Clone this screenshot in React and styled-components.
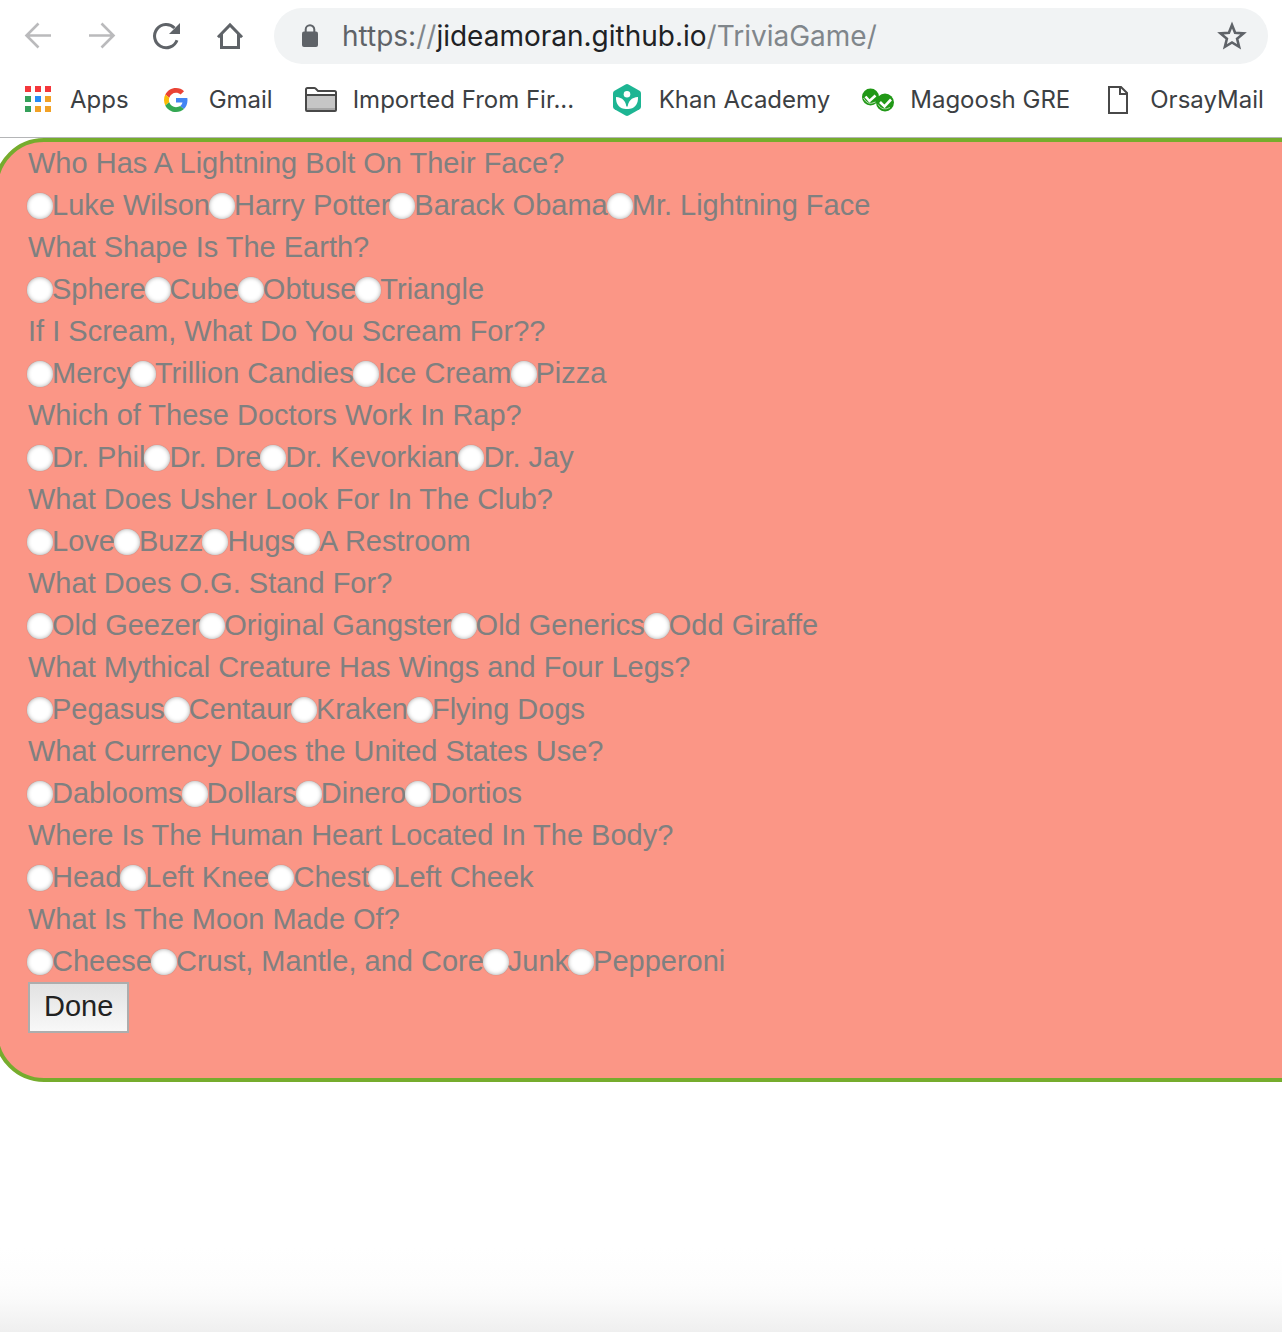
import React from "react";
import styled, { createGlobalStyle } from "styled-components";

const GlobalStyle = createGlobalStyle`
  *, *::before, *::after { box-sizing: border-box; }
  body { margin: 0; background: #fff; }
`;

const uiFont = `Inter, Roboto, "Liberation Sans", sans-serif`;
const pageFont = `"Liberation Sans", Arial, Helvetica, sans-serif`;

const Page = styled.div`
  display: flex;
  flex-direction: column;
  min-height: 100vh;
  overflow: hidden;
  background: linear-gradient(to top, #efefef, #fafafa 32px, #fdfdfd 48px, #fff 84px) #fff;
`;

const Chrome = styled.header`
  background: #fff;
  border-bottom: 1px solid #b4b5b7;
  font-family: ${uiFont};
`;

const Toolbar = styled.div`
  display: flex;
  align-items: center;
  gap: 32px;
  padding: 8px 14px 8px 22px;
`;

const NavButton = styled.button`
  display: flex;
  flex: none;
  width: 32px;
  height: 32px;
  padding: 0;
  border: 0;
  background: none;
  color: #5f6368;

  &:disabled { color: #bababc; }
`;

const AddressBar = styled.div`
  display: flex;
  flex: 1;
  align-items: center;
  gap: 16px;
  min-width: 0;
  height: 56px;
  margin-left: -4px;
  padding: 0 20px;
  border-radius: 28px;
  background: #f1f3f4;
  color: #5f6368;
`;

const Url = styled.div`
  flex: 1;
  min-width: 0;
  overflow: hidden;
  white-space: nowrap;
  font-size: 28px;
  line-height: 40px;
  color: #80868b;
`;

const UrlScheme = styled.span`
  color: #5f6368;
`;

const UrlHost = styled.span`
  color: #202124;
`;

const Bookmarks = styled.nav`
  display: flex;
  align-items: center;
  gap: 32px;
  height: 65px;
  padding: 0 20px 9px 22px;
`;

const Bookmark = styled.a`
  display: flex;
  flex: none;
  align-items: center;
  gap: 16px;
  min-width: ${({ $folder }) => ($folder ? "274px" : "0")};
  color: #3c4043;
  font-size: 24px;
  line-height: 32px;
  text-decoration: none;
  white-space: nowrap;
`;

const Glyph = styled.svg`
  display: block;
  flex: none;
  width: 32px;
  height: 32px;
`;

const Quiz = styled.form`
  display: flow-root;
  margin: 0 -60px 0 -6px;
  padding: 0 84px 45px 30px;
  border: 4px solid #76ac2d;
  border-radius: 50px;
  background: #fb9686;
  color: #808080;
  font-family: ${pageFont};
  font-size: 29px;
  line-height: 42px;
`;

const Question = styled.fieldset`
  min-width: 0;
  margin: 0;
  padding: 0;
  border: 0;
`;

const Prompt = styled.legend`
  display: block;
  padding: 0;
`;

const Answers = styled.div`
  display: flex;
  flex-wrap: wrap;
`;

const Answer = styled.label`
  display: flex;
  align-items: center;
  white-space: nowrap;
`;

const Radio = styled.input`
  appearance: none;
  flex: none;
  width: 26px;
  height: 26px;
  margin: 2px -1px 0;
  border-radius: 50%;
  background: #fff;
  box-shadow: inset 0 0 4px #aaa, 0 0 1px #8c7c78;

  &:checked { background: radial-gradient(#444 5px, #fff 6px); }
`;

const DoneButton = styled.button`
  display: block;
  height: 51px;
  padding: 0 14px 4px;
  border: 2px solid #adadad;
  border-radius: 0;
  background: linear-gradient(#e2e2e2, #f8f8f8);
  color: #222;
  font-family: ${pageFont};
  font-size: 29px;
  line-height: 42px;
`;

const questions = [
  ["Who Has A Lightning Bolt On Their Face?", ["Luke Wilson", "Harry Potter", "Barack Obama", "Mr. Lightning Face"]],
  ["What Shape Is The Earth?", ["Sphere", "Cube", "Obtuse", "Triangle"]],
  ["If I Scream, What Do You Scream For??", ["Mercy", "Trillion Candies", "Ice Cream", "Pizza"]],
  ["Which of These Doctors Work In Rap?", ["Dr. Phil", "Dr. Dre", "Dr. Kevorkian", "Dr. Jay"]],
  ["What Does Usher Look For In The Club?", ["Love", "Buzz", "Hugs", "A Restroom"]],
  ["What Does O.G. Stand For?", ["Old Geezer", "Original Gangster", "Old Generics", "Odd Giraffe"]],
  ["What Mythical Creature Has Wings and Four Legs?", ["Pegasus", "Centaur", "Kraken", "Flying Dogs"]],
  ["What Currency Does the United States Use?", ["Dablooms", "Dollars", "Dinero", "Dortios"]],
  ["Where Is The Human Heart Located In The Body?", ["Head", "Left Knee", "Chest", "Left Cheek"]],
  ["What Is The Moon Made Of?", ["Cheese", "Crust, Mantle, and Core", "Junk", "Pepperoni"]],
];

const BackIcon = () => (
  <Glyph viewBox="0 0 32 32" fill="none" stroke="currentColor" strokeWidth="2.6" aria-hidden="true">
    <path d="M29 15.5H5M16.5 3.5l-12 12 12 12" />
  </Glyph>
);

const ForwardIcon = () => (
  <Glyph viewBox="0 0 32 32" fill="none" stroke="currentColor" strokeWidth="2.6" aria-hidden="true">
    <path d="M3 15.5h24M15.5 3.5l12 12-12 12" />
  </Glyph>
);

const ReloadIcon = () => (
  <Glyph viewBox="0 0 32 32" aria-hidden="true">
    <path d="M27 20.200A11.600 11.600 0 1 1 24.500 8" fill="none" stroke="currentColor" strokeWidth="3" />
    <path d="M30 3v11H19z" fill="currentColor" />
  </Glyph>
);

const HomeIcon = () => (
  <Glyph viewBox="0 0 32 32" fill="none" stroke="currentColor" strokeWidth="3" aria-hidden="true">
    <path d="M4 17.200L16 5l12 12.200M7.500 14v13.500h17V14" />
  </Glyph>
);

const LockIcon = () => (
  <Glyph viewBox="0 0 32 32" aria-hidden="true">
    <rect x="8" y="11.500" width="16" height="15.500" rx="2" fill="currentColor" />
    <path d="M11.700 12V9.500a4.300 4.300 0 0 1 8.600 0V12" fill="none" stroke="currentColor" strokeWidth="2" />
  </Glyph>
);

const StarIcon = () => (
  <Glyph viewBox="0 0 32 32" fill="none" stroke="currentColor" strokeWidth="2.600" aria-hidden="true">
    <path d="M16 5l3.100 7.800 8.400.600-6.400 5.300 2 8.100-7.100-4.300-7.100 4.300 2-8.100-6.400-5.300 8.400-.600z" />
  </Glyph>
);

const appColors = ["#f4373b", "#f4373b", "#f4373b", "#35a05a", "#268bf5", "#f2a125", "#35a05a", "#f2a125", "#f2a125"];

const AppsIcon = () => (
  <Glyph viewBox="0 0 32 32" aria-hidden="true">
    {appColors.map((color, i) => (
      <rect key={i} x={3 + (i % 3) * 10} y={2 + Math.floor(i / 3) * 10} width="6" height="6" fill={color} />
    ))}
  </Glyph>
);

const GmailIcon = () => (
  <Glyph viewBox="0 0 32 32" aria-hidden="true">
    <svg x="3" y="4" width="24" height="24" viewBox="0 0 48 48">
      <path fill="#EA4335" d="M24 9.500c3.540 0 6.710 1.220 9.210 3.600l6.850-6.850C35.900 2.380 30.470 0 24 0 14.620 0 6.510 5.380 2.560 13.220l7.980 6.190C12.430 13.720 17.740 9.500 24 9.500z" />
      <path fill="#4285F4" d="M46.980 24.550c0-1.570-.15-3.090-.38-4.550H24v9.020h12.940c-.58 2.960-2.260 5.480-4.780 7.180l7.730 6c4.510-4.180 7.090-10.360 7.090-17.650z" />
      <path fill="#FBBC05" d="M10.530 28.590A14.500 14.500 0 0 1 9.770 24c0-1.600.27-3.140.76-4.590l-7.980-6.190A23.900 23.900 0 0 0 0 24c0 3.880.92 7.540 2.560 10.780z" />
      <path fill="#34A853" d="M24 48c6.480 0 11.930-2.130 15.890-5.810l-7.730-6c-2.150 1.450-4.920 2.300-8.160 2.300-6.260 0-11.570-4.220-13.470-9.910l-7.980 6.190C6.510 42.620 14.620 48 24 48z" />
    </svg>
  </Glyph>
);

const FolderIcon = () => (
  <Glyph viewBox="0 0 32 32" aria-hidden="true">
    <path d="M1 26V5.500Q1 4 2.500 4H9.500q1 0 1.500 1L13 7h16.500Q31 7 31 8.500V26q0 1-1 1H2q-1 0-1-1z" fill="#fff" stroke="#484848" strokeWidth="2" />
    <path d="M2 11h28v15H2z" fill="#c6c6c6" />
    <path d="M2 24h28v2H2z" fill="#a6a6a6" />
    <path d="M2 11h28" stroke="#484848" strokeWidth="2" />
  </Glyph>
);

const KhanIcon = () => (
  <Glyph viewBox="0 0 32 32" aria-hidden="true">
    <path d="M14.500.400q1.500-.8 3 0l11 6.300q1.500.9 1.500 2.600v13.400q0 1.700-1.500 2.600l-11 6.300q-1.500.8-3 0l-11-6.300Q2 24.400 2 22.700V9.300q0-1.700 1.500-2.600z" fill="#1db593" />
    <circle cx="16" cy="10.300" r="3.300" fill="#fff" />
    <path d="M5 13c6.500.4 10.300 4 10.600 12C9 25.200 4.500 20.500 5 13z" fill="#fff" />
    <path d="M27 13c-6.500.4-10.300 4-10.600 12C23 25.200 27.500 20.500 27 13z" fill="#fff" />
    <path d="M14.500 22.500h3V25h-3z" fill="#fff" />
  </Glyph>
);

const MagooshIcon = () => (
  <Glyph viewBox="0 0 32 32" aria-hidden="true">
    <ellipse cx="8.500" cy="13" rx="8.500" ry="8.500" fill="#219817" />
    <ellipse cx="23" cy="18.500" rx="9" ry="9" fill="#219817" />
    <path d="M3.500 12.500L7.500 17l6-5.500M18 18l4.500 4.500 6.500-7" fill="none" stroke="#fff" strokeWidth="2.600" />
    <path d="M1.500 14q4 8 12 4" fill="none" stroke="#b9e2b5" strokeWidth="1" />
    <path d="M16 20.500q4 7 12 3" fill="none" stroke="#a5d8a0" strokeWidth="1" />
  </Glyph>
);

const FileIcon = () => (
  <Glyph viewBox="0 0 32 32" fill="none" stroke="#484848" strokeWidth="2" aria-hidden="true">
    <path d="M7 3h12l6 6v20H7zM18 3v7h7" />
  </Glyph>
);

const bookmarks = [
  { name: "Apps", Icon: AppsIcon },
  { name: "Gmail", Icon: GmailIcon },
  { name: "Imported From Fir...", Icon: FolderIcon, folder: true },
  { name: "Khan Academy", Icon: KhanIcon },
  { name: "Magoosh GRE", Icon: MagooshIcon },
  { name: "OrsayMail", Icon: FileIcon },
];

export default function App() {
  return (
    <Page>
      <GlobalStyle />
      <Chrome>
        <Toolbar>
          <NavButton type="button" aria-label="Back" disabled><BackIcon /></NavButton>
          <NavButton type="button" aria-label="Forward" disabled><ForwardIcon /></NavButton>
          <NavButton type="button" aria-label="Reload"><ReloadIcon /></NavButton>
          <NavButton type="button" aria-label="Home"><HomeIcon /></NavButton>
          <AddressBar>
            <LockIcon />
            <Url role="textbox" aria-label="Address" tabIndex={0}>
              <UrlScheme>https:</UrlScheme>//<UrlHost>jideamoran.github.io</UrlHost>/TriviaGame/
            </Url>
            <NavButton type="button" aria-label="Bookmark this page"><StarIcon /></NavButton>
          </AddressBar>
        </Toolbar>
        <Bookmarks aria-label="Bookmarks">
          {bookmarks.map(({ name, Icon, folder }) => (
            <Bookmark key={name} href="#" $folder={folder}><Icon />{name}</Bookmark>
          ))}
        </Bookmarks>
      </Chrome>
      <main>
        <Quiz onSubmit={(event) => event.preventDefault()}>
          {questions.map(([prompt, answers], index) => (
            <Question key={prompt}>
              <Prompt>{prompt}</Prompt>
              <Answers>
                {answers.map((answer) => (
                  <Answer key={answer}>
                    <Radio type="radio" name={`question-${index}`} value={answer} />
                    {answer}
                  </Answer>
                ))}
              </Answers>
            </Question>
          ))}
          <DoneButton type="submit">Done</DoneButton>
        </Quiz>
      </main>
    </Page>
  );
}
